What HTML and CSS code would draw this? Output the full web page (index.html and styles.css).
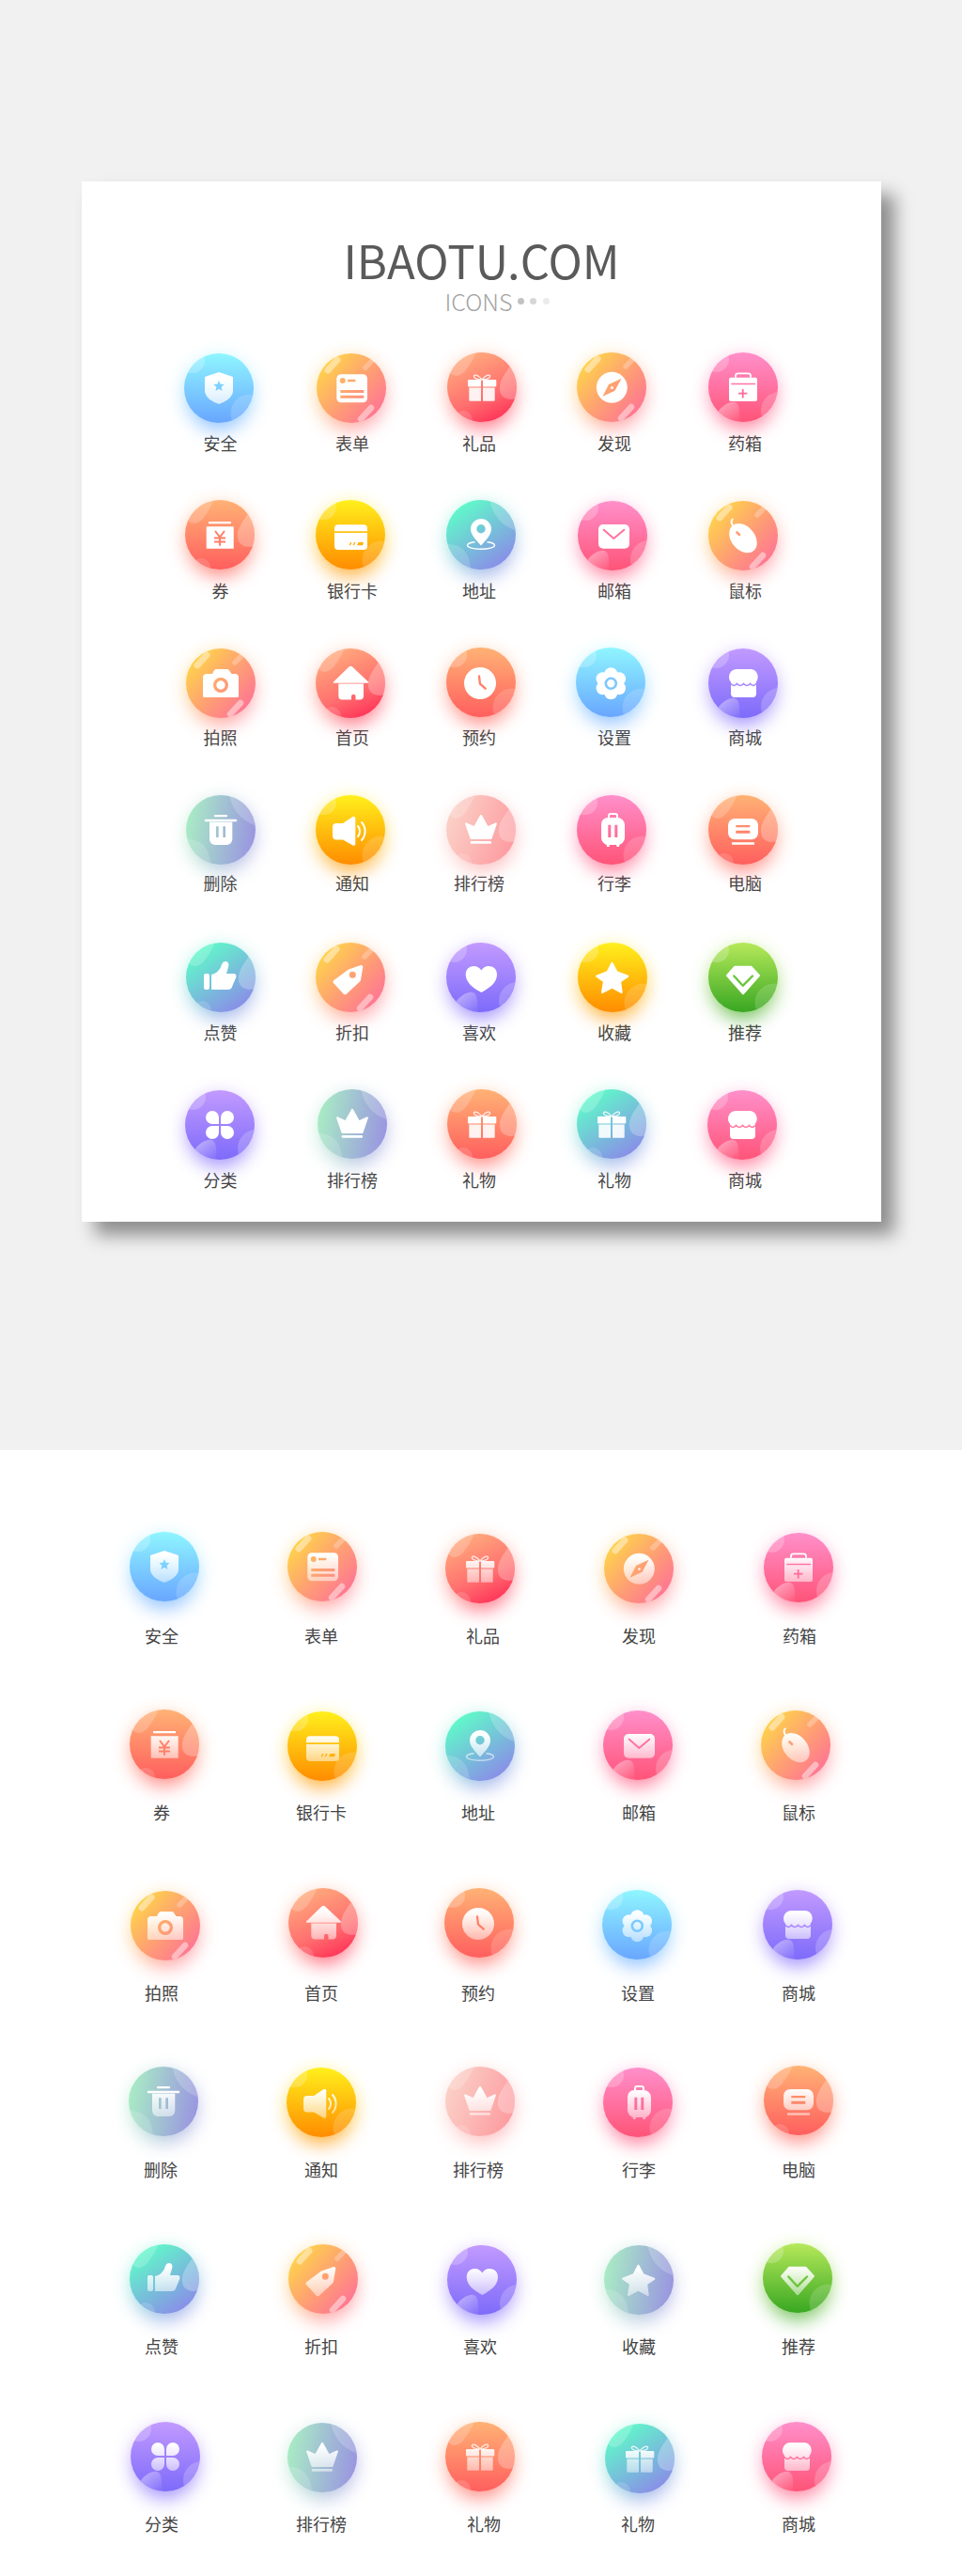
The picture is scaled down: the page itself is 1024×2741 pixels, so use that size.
FILE: index.html
```html
<!DOCTYPE html>
<html lang="zh">
<head>
<meta charset="utf-8">
<title>IBAOTU.COM ICONS</title>
<link rel="stylesheet" href="styles.css">
</head>
<body>
<svg class="sprite" aria-hidden="true">
<defs>
<linearGradient id="leafFade" x1="0" y1="0" x2="1" y2="1"><stop offset="0" stop-color="#fff" stop-opacity=".45"/><stop offset="1" stop-color="#fff" stop-opacity="0"/></linearGradient>
<g id="deco-a" fill="#fff"><circle cx="9" cy="8" r="13" opacity=".22"/><circle cx="70" cy="64" r="20.5" opacity=".16"/></g>
<g id="deco-b" fill="#fff"><path d="M32-2C28 6 24 14 19 20 14 26 6 27 2 20L-2-2Z" opacity=".2"/><path d="M68 13C62 22 55 30 56 40 57 50 68 52 76 48V13Z" opacity=".26"/><circle cx="17" cy="72" r="10" opacity=".15"/></g>
<g id="deco-c" stroke="#fff" stroke-linecap="round" fill="none"><path d="M12 18 22 7" stroke-width="7" opacity=".42"/><path d="M52 15 59 8" stroke-width="5.5" opacity=".25"/><path d="M47 70 58 58" stroke-width="6.5" opacity=".45"/></g>
<g id="deco-d" fill="#fff"><circle cx="8" cy="7" r="14" opacity=".22"/><circle cx="76" cy="62" r="20" opacity=".2"/><path d="M11 62C16 56 23 52 28 53 32 54 34 58 33 76H11Z" fill="url(#leafFade)"/></g>
<g id="deco-e" fill="#fff"><path d="M46-2C48 14 58 28 76 33V-2Z" opacity=".2"/><path d="M-2 47C12 46 26 52 26 76H-2Z" opacity=".16"/></g>

<path id="i-shield" fill="#fff" fill-rule="evenodd" d="M37 20 52 25V40C52 47 43 52 37 54 31 52 22 47 22 40V25ZM37 29 38.6 32.8 42.7 33.1 39.6 35.8 40.5 39.9 37 37.7 33.5 39.9 34.4 35.8 31.3 33.1 35.4 32.8Z"/>
<path id="i-form" fill="#fff" fill-rule="evenodd" d="M26 22.3H49.500A4.500 4.500 0 0 1 54 26.800V47.800A4.500 4.500 0 0 1 49.500 52.300H26A4.500 4.500 0 0 1 21.300 47.800V26.800A4.500 4.500 0 0 1 26 22.300ZM27.700 26A3 3 0 1 0 27.700 32 3 3 0 1 0 27.700 26ZM33 27.800V30.200H41.300V27.800ZM25.300 39V42H50.300V39ZM25.300 44.700V47.700H50.300V44.700Z"/>
<g id="i-gift" fill="#fff"><path d="M23 29H36V36.500H23A1 1 0 0 1 22 35.500V30A1 1 0 0 1 23 29ZM38 29H51.300A1 1 0 0 1 52.300 30V35.500A1 1 0 0 1 51.300 36.500H38Z"/><path opacity=".9" d="M23.300 37.500H36V51.700H24.300A1 1 0 0 1 23.300 50.700ZM38 37.500H50.700V50.700A1 1 0 0 1 49.700 51.700H38Z"/><path fill="none" stroke="#fff" stroke-width="1.300" opacity=".85" d="M37 29C33 24 29 23 28.500 25 28 27.500 32 29 37 29 42 29 46 27.500 45.500 25 45 23 41 24 37 29Z"/></g>
<path id="i-compass" fill="#fff" fill-rule="evenodd" d="M37.300 20.800A16.500 16.500 0 1 0 37.300 53.800 16.500 16.500 0 1 0 37.300 20.800ZM47.500 27.800 40.500 40.800 27.500 46.800 34 34ZM37.500 36A1.500 1.500 0 1 1 37.500 39 1.500 1.500 0 1 1 37.500 36Z"/>
<g id="i-kit"><path fill="#fff" fill-rule="evenodd" d="M24 26.700H50A2 2 0 0 1 52 28.700V50A2 2 0 0 1 50 52H24A2 2 0 0 1 22 50V28.700A2 2 0 0 1 24 26.700ZM24.300 32.700V34.300H50V32.700ZM35.800 39V42.800H32V44.600H35.800V48.400H37.600V44.600H41.400V42.800H37.600V39Z"/><path fill="none" stroke="#fff" stroke-width="1.800" d="M29 26.700V24.800A2.500 2.500 0 0 1 31.500 22.300H42.500A2.500 2.500 0 0 1 45 24.800V26.700"/></g>
<g id="i-coupon"><path fill="#fff" d="M25 23H49V25.300H25ZM22.700 28.300H51.700V51.700H22.700Z"/><path fill="none" stroke="var(--ink)" stroke-width="2" d="M32 33 37 39.500 42 33M37 39.500V48.700M31 40.500H43M31 44.500H43"/></g>
<path id="i-card" fill="#fff" fill-rule="evenodd" d="M24 26.300H51A4 4 0 0 1 55 30.300V49A4 4 0 0 1 51 53H24A4 4 0 0 1 20 49V30.300A4 4 0 0 1 24 26.300ZM20 33.300V35H55V33.300ZM37 45 35.500 48.300H37L38.500 45ZM41 45 39.500 48.300H41L42.500 45ZM45.500 45 44 48.300H50L51 45Z"/>
<g id="i-pin"><path fill="#fff" fill-rule="evenodd" d="M37 48.500C32 43 26 37 26 31A11 11 0 0 1 48 31C48 37 42 43 37 48.500ZM37 26A4.700 4.700 0 1 0 37 35.400 4.700 4.700 0 1 0 37 26Z"/><path fill="none" stroke="#fff" stroke-width="1.400" d="M30.500 44.700C25 45.300 22.500 47 22.500 48.300 22.500 50.500 29 52.300 37 52.300 45 52.300 51.500 50.500 51.500 48.300 51.500 47 49 45.300 43.500 44.700"/></g>
<g id="i-mail"><rect x="22" y="25" width="33" height="25.700" rx="5" fill="#fff"/><path fill="none" stroke="var(--ink)" stroke-width="2" stroke-linecap="round" stroke-linejoin="round" d="M27.700 30.700 38.300 40 49.300 30.700"/></g>
<g id="i-mouse" fill="#fff"><ellipse cx="37" cy="39.700" rx="17.500" ry="12.500" transform="rotate(50 37 39.700)"/><path fill="none" stroke="var(--ink)" stroke-width="2.600" stroke-linecap="round" d="M30.500 33.500 33 36"/><path fill="none" stroke="#fff" stroke-width="2" stroke-linecap="round" d="M27.500 27.500C24 25 24 21 25.700 19.500"/></g>
<path id="i-camera" fill="#fff" fill-rule="evenodd" d="M22 27H28L29.500 24A3.500 3.500 0 0 1 32.500 22H43.500A3.500 3.500 0 0 1 46.500 24L48.500 27H52A4 4 0 0 1 56 31V50.500A1.500 1.500 0 0 1 54.500 52H19.500A1.500 1.500 0 0 1 18 50.500V31A4 4 0 0 1 22 27ZM37 31A8 8 0 1 0 37 47 8 8 0 1 0 37 31ZM37 34.300A4.700 4.700 0 1 1 37 43.700 4.700 4.700 0 1 1 37 34.300Z"/>
<path id="i-home" fill="#fff" fill-rule="evenodd" d="M35.500 19.500A2.500 2.500 0 0 1 39 19.500L56 35.500A.7.7 0 0 1 55.500 36.700H19.500A.7.7 0 0 1 19 35.500ZM24.300 37.500H51V50.500A4 4 0 0 1 47 54.500H42.500V50.500A2.300 2.300 0 0 0 38 50.500V54.500H28.300A4 4 0 0 1 24.300 50.500Z"/>
<g id="i-clock"><circle cx="36" cy="38" r="17" fill="#fff"/><path fill="none" stroke="var(--ink)" stroke-width="2.300" stroke-linecap="round" stroke-linejoin="round" d="M35 30.500 36 38.700 41.700 43.700"/></g>
<g id="i-gear" fill="#fff"><circle cx="37.300" cy="28.300" r="7"/><circle cx="37.300" cy="48.300" r="7"/><circle cx="28.600" cy="33.300" r="7"/><circle cx="46" cy="33.300" r="7"/><circle cx="28.600" cy="43.300" r="7"/><circle cx="46" cy="43.300" r="7"/><circle cx="37.300" cy="38.300" r="10"/><circle cx="37.300" cy="38.300" r="5.500" fill="none" stroke="var(--ink)" stroke-width="2.600"/></g>
<g id="i-store"><path fill="#fff" d="M30 22H45C49.500 22 52.700 26 52.700 30.500 52.700 34 50.500 36.500 48 37.700H26.500C24 36.500 22 34 22 30.500 22 26 25.500 22 30 22Z"/><path fill="#fff" d="M24 36H51V48A4 4 0 0 1 47 52H28A4 4 0 0 1 24 48Z"/><path fill="none" stroke="var(--ink)" stroke-width="1.500" stroke-linecap="round" d="M24 37.500C26 40 28.500 40 30.500 37.500 32.500 40 35.500 40 37.500 37.500 39.500 40 42.500 40 44.500 37.500 46.500 40 49 40 51 37.500"/></g>
<path id="i-trash" fill="#fff" fill-rule="evenodd" d="M31 21H43A1.100 1.100 0 0 1 43 23.300H31A1.100 1.100 0 0 1 31 21ZM21 25.700H53A1.300 1.300 0 0 1 53 28.300H21A1.300 1.300 0 0 1 21 25.700ZM25 28.700H49.300V47A6 6 0 0 1 43.300 53H31A6 6 0 0 1 25 47ZM32 33.300V45H34.700V33.300ZM39.300 33.300V45H42V33.300Z"/>
<g id="i-speaker"><path fill="#fff" d="M22 30H29L39.500 23A1.800 1.800 0 0 1 42.300 24.500V52A1.800 1.800 0 0 1 39.500 53.500L29 47.500H22A4 4 0 0 1 18 43.500V34A4 4 0 0 1 22 30Z"/><path fill="none" stroke="#fff" stroke-width="2" stroke-linecap="round" d="M45 33C47.700 36 47.700 41 45 44M49 29C53.800 34.500 53.800 42.500 49 48"/></g>
<g id="i-crown" fill="#fff"><path stroke="#fff" stroke-width="2.200" stroke-linejoin="round" d="M37 22 44 34.500 52.800 30.500 47.500 46H26.500L21.200 30.500 30 34.500Z"/><rect x="25.700" y="49" width="22.300" height="2.700" rx="1"/></g>
<g id="i-bag"><path fill="#fff" fill-rule="evenodd" d="M33 24H43A8 8 0 0 1 51 32V45.500A7.500 7.500 0 0 1 43.500 53H33.500A7.500 7.500 0 0 1 26 45.500V31A7 7 0 0 1 33 24ZM33.300 31.700V45H36.300V31.700ZM40.300 31.700V45H43.300V31.700Z"/><path fill="none" stroke="#fff" stroke-width="2" d="M34 24V22A2 2 0 0 1 36 20H41A2 2 0 0 1 43 22V24"/><path fill="#fff" d="M31.500 52H35L34.500 55H32ZM42 52H45.500L45 55H42.500Z"/></g>
<path id="i-pc" fill="#fff" fill-rule="evenodd" d="M28 25H46A7 7 0 0 1 53 32V40.300A7 7 0 0 1 46 47.300H28A7 7 0 0 1 21 40.300V32A7 7 0 0 1 28 25ZM29.300 32V34.300H44.300V32ZM29.300 37.700V40.700H44.300V37.700ZM25 50.300H49V52.700H25Z"/>
<path id="i-thumb" fill="#fff" d="M21 33H23A2 2 0 0 1 25 35V48A2 2 0 0 1 23 50H21A2 2 0 0 1 19 48V35A2 2 0 0 1 21 33ZM27 34C32 33 35 30 37 26 38 23 39 20 42 20 45 20 46 23 45 26L43 33H51C53 33 54 35 53.300 37L49 47C48.500 49 47 50 45 50H27Z"/>
<path id="i-tag" fill="#fff" fill-rule="evenodd" d="M48 24A2 2 0 0 1 50.300 26L48 39.500A3 3 0 0 1 47 41.500L33 54.500A2.500 2.500 0 0 1 29.500 54.500L19.500 43.500A2 2 0 0 1 19.500 40L35 28.500A3 3 0 0 1 36.500 28ZM39.300 30.800A3.500 3.500 0 1 0 39.300 37.800 3.500 3.500 0 1 0 39.300 30.800Z"/>
<path id="i-heart" fill="#fff" d="M37.300 53C30 49 20.700 43 20.700 34 20.700 28 25 25 29.500 25 33 25 35.500 27 37.300 29.500 39 27 41.500 25 45 25 50 25 54 28 54 34 54 43 45 49 37.300 53Z"/>
<path id="i-star" fill="#fff" stroke="#fff" stroke-width="2" stroke-linejoin="round" d="M36.500 21.700 41.500 31.200 53.300 35.800 45.100 41.300 46.700 53 36.500 47.500 26 53 27.900 41.300 20 35.800 31.500 31.200Z"/>
<g id="i-gem"><path fill="#fff" stroke="#fff" stroke-width="2" stroke-linejoin="round" d="M28.200 25.700H45.500L54 35 37 54.300 20 35Z"/><path fill="none" stroke="var(--ink)" stroke-width="2.400" stroke-linecap="round" stroke-linejoin="round" d="M27.300 35.500 36.700 45.800 47 35.500"/></g>
<path id="i-clover" fill="#fff" d="M36 36H29A7 7 0 1 1 36 29ZM38 36V29A7 7 0 1 1 45 36ZM36 38V45A7 7 0 1 1 29 38ZM38 38H45A7 7 0 1 1 38 45Z"/>
</defs>
</svg>

<section class="hero">
<div class="card">
<header class="head">
<h1 class="title">IBAOTU.COM</h1>
<div class="sub"><span class="sub-text">ICONS</span><i class="dot dot-a"></i><i class="dot dot-b"></i><i class="dot dot-c"></i></div>
</header>

<div class="row row-a r157 gap10">
<div class="cell"><div class="orb g-blue sx-3 sy1"><div class="face"><svg class="deco" viewBox="0 0 74 74"><use href="#deco-a"/></svg></div><svg class="glyph fade-soft" viewBox="0 0 74 74"><use href="#i-shield"/></svg></div><p class="label">安全</p></div>
<div class="cell"><div class="orb g-sun sx-2 sy1"><div class="face"><svg class="deco" viewBox="0 0 74 74"><use href="#deco-c"/></svg></div><svg class="glyph" viewBox="0 0 74 74"><use href="#i-form"/></svg></div><p class="label">表单</p></div>
<div class="cell"><div class="orb g-red sx6"><div class="face"><svg class="deco" viewBox="0 0 74 74"><use href="#deco-b"/></svg></div><svg class="glyph" viewBox="0 0 74 74"><use href="#i-gift"/></svg></div><p class="label">礼品</p></div>
<div class="cell"><div class="orb g-sun sx-6"><div class="face"><svg class="deco" viewBox="0 0 74 74"><use href="#deco-c"/></svg></div><svg class="glyph" viewBox="0 0 74 74"><use href="#i-compass"/></svg></div><p class="label">发现</p></div>
<div class="cell"><div class="orb g-pink sx-4"><div class="face"><svg class="deco" viewBox="0 0 74 74"><use href="#deco-d"/></svg></div><svg class="glyph" viewBox="0 0 74 74"><use href="#i-kit"/></svg></div><p class="label">药箱</p></div>
</div>

<div class="row row-a r157 gap10">
<div class="cell"><div class="orb g-coral sx-1"><div class="face"><svg class="deco" viewBox="0 0 74 74"><use href="#deco-b"/></svg></div><svg class="glyph" viewBox="0 0 74 74"><use href="#i-coupon"/></svg></div><p class="label">券</p></div>
<div class="cell"><div class="orb g-yellow sx-4"><div class="face"><svg class="deco" viewBox="0 0 74 74"><use href="#deco-a"/></svg></div><svg class="glyph" viewBox="0 0 74 74"><use href="#i-card"/></svg></div><p class="label">银行卡</p></div>
<div class="cell"><div class="orb g-teal sx4"><div class="face"><svg class="deco" viewBox="0 0 74 74"><use href="#deco-e"/></svg></div><svg class="glyph" viewBox="0 0 74 74"><use href="#i-pin"/></svg></div><p class="label">地址</p></div>
<div class="cell"><div class="orb g-pink sx-4 sy1"><div class="face"><svg class="deco" viewBox="0 0 74 74"><use href="#deco-d"/></svg></div><svg class="glyph" viewBox="0 0 74 74"><use href="#i-mail"/></svg></div><p class="label">邮箱</p></div>
<div class="cell"><div class="orb g-sun sx-4 sy1"><div class="face"><svg class="deco" viewBox="0 0 74 74"><use href="#deco-c"/></svg></div><svg class="glyph" viewBox="0 0 74 74"><use href="#i-mouse"/></svg></div><p class="label">鼠标</p></div>
</div>

<div class="row row-a r157 gap9">
<div class="cell"><div class="orb g-sun sx1 sy1"><div class="face"><svg class="deco" viewBox="0 0 74 74"><use href="#deco-c"/></svg></div><svg class="glyph" viewBox="0 0 74 74"><use href="#i-camera"/></svg></div><p class="label">拍照</p></div>
<div class="cell"><div class="orb g-red sx-4 sy1"><div class="face"><svg class="deco" viewBox="0 0 74 74"><use href="#deco-b"/></svg></div><svg class="glyph" viewBox="0 0 74 74"><use href="#i-home"/></svg></div><p class="label">首页</p></div>
<div class="cell"><div class="orb g-coral sx4"><div class="face"><svg class="deco" viewBox="0 0 74 74"><use href="#deco-a"/></svg></div><svg class="glyph" viewBox="0 0 74 74"><use href="#i-clock"/></svg></div><p class="label">预约</p></div>
<div class="cell"><div class="orb g-blue sx-8"><div class="face"><svg class="deco" viewBox="0 0 74 74"><use href="#deco-a"/></svg></div><svg class="glyph" viewBox="0 0 74 74"><use href="#i-gear"/></svg></div><p class="label">设置</p></div>
<div class="cell"><div class="orb g-purple sx-4 sy1"><div class="face"><svg class="deco" viewBox="0 0 74 74"><use href="#deco-d"/></svg></div><svg class="glyph" viewBox="0 0 74 74"><use href="#i-store"/></svg></div><p class="label">商城</p></div>
</div>

<div class="row row-a r157 gap7">
<div class="cell"><div class="orb g-mint sx1"><div class="face"><svg class="deco" viewBox="0 0 74 74"><use href="#deco-e"/></svg></div><svg class="glyph" viewBox="0 0 74 74"><use href="#i-trash"/></svg></div><p class="label">删除</p></div>
<div class="cell"><div class="orb g-yellow sx-4"><div class="face"><svg class="deco" viewBox="0 0 74 74"><use href="#deco-a"/></svg></div><svg class="glyph" viewBox="0 0 74 74"><use href="#i-speaker"/></svg></div><p class="label">通知</p></div>
<div class="cell"><div class="orb g-blush sx4"><div class="face"><svg class="deco" viewBox="0 0 74 74"><use href="#deco-b"/></svg></div><svg class="glyph" viewBox="0 0 74 74"><use href="#i-crown"/></svg></div><p class="label">排行榜</p></div>
<div class="cell"><div class="orb g-pink sx-6"><div class="face"><svg class="deco" viewBox="0 0 74 74"><use href="#deco-a"/></svg></div><svg class="glyph" viewBox="0 0 74 74"><use href="#i-bag"/></svg></div><p class="label">行李</p></div>
<div class="cell"><div class="orb g-coral sx-4"><div class="face"><svg class="deco" viewBox="0 0 74 74"><use href="#deco-b"/></svg></div><svg class="glyph" viewBox="0 0 74 74"><use href="#i-pc"/></svg></div><p class="label">电脑</p></div>
</div>

<div class="row row-a r156 gap9">
<div class="cell"><div class="orb g-teal sx1"><div class="face"><svg class="deco" viewBox="0 0 74 74"><use href="#deco-b"/></svg></div><svg class="glyph" viewBox="0 0 74 74"><use href="#i-thumb"/></svg></div><p class="label">点赞</p></div>
<div class="cell"><div class="orb g-sun sx-4"><div class="face"><svg class="deco" viewBox="0 0 74 74"><use href="#deco-c"/></svg></div><svg class="glyph" viewBox="0 0 74 74"><use href="#i-tag"/></svg></div><p class="label">折扣</p></div>
<div class="cell"><div class="orb g-purple sx4"><div class="face"><svg class="deco" viewBox="0 0 74 74"><use href="#deco-d"/></svg></div><svg class="glyph" viewBox="0 0 74 74"><use href="#i-heart"/></svg></div><p class="label">喜欢</p></div>
<div class="cell"><div class="orb g-yellow sx-4"><div class="face"><svg class="deco" viewBox="0 0 74 74"><use href="#deco-a"/></svg></div><svg class="glyph" viewBox="0 0 74 74"><use href="#i-star"/></svg></div><p class="label">收藏</p></div>
<div class="cell"><div class="orb g-green sx-4"><div class="face"><svg class="deco" viewBox="0 0 74 74"><use href="#deco-a"/></svg></div><svg class="glyph" viewBox="0 0 74 74"><use href="#i-gem"/></svg></div><p class="label">推荐</p></div>
</div>

<div class="row row-a r142 gap10">
<div class="cell"><div class="orb g-purple sx-1 sy1"><div class="face"><svg class="deco" viewBox="0 0 74 74"><use href="#deco-d"/></svg></div><svg class="glyph" viewBox="0 0 74 74"><use href="#i-clover"/></svg></div><p class="label">分类</p></div>
<div class="cell"><div class="orb g-mint"><div class="face"><svg class="deco" viewBox="0 0 74 74"><use href="#deco-e"/></svg></div><svg class="glyph" viewBox="0 0 74 74"><use href="#i-crown"/></svg></div><p class="label">排行榜</p></div>
<div class="cell"><div class="orb g-coral sx6"><div class="face"><svg class="deco" viewBox="0 0 74 74"><use href="#deco-b"/></svg></div><svg class="glyph" viewBox="0 0 74 74"><use href="#i-gift"/></svg></div><p class="label">礼物</p></div>
<div class="cell"><div class="orb g-teal sx-6"><div class="face"><svg class="deco" viewBox="0 0 74 74"><use href="#deco-b"/></svg></div><svg class="glyph" viewBox="0 0 74 74"><use href="#i-gift"/></svg></div><p class="label">礼物</p></div>
<div class="cell"><div class="orb g-pink sx-6 sy1"><div class="face"><svg class="deco" viewBox="0 0 74 74"><use href="#deco-d"/></svg></div><svg class="glyph" viewBox="0 0 74 74"><use href="#i-store"/></svg></div><p class="label">商城</p></div>
</div>
</div>
</section>

<section class="sheet">
<div class="row row-b r189 gap24">
<div class="cell"><div class="orb g-blue sx6"><div class="face"><svg class="deco" viewBox="0 0 74 74"><use href="#deco-a"/></svg></div><svg class="glyph fade" viewBox="0 0 74 74"><use href="#i-shield"/></svg></div><p class="label">安全</p></div>
<div class="cell"><div class="orb g-sun sx2"><div class="face"><svg class="deco" viewBox="0 0 74 74"><use href="#deco-c"/></svg></div><svg class="glyph fade" viewBox="0 0 74 74"><use href="#i-form"/></svg></div><p class="label">表单</p></div>
<div class="cell"><div class="orb g-red sy2"><div class="face"><svg class="deco" viewBox="0 0 74 74"><use href="#deco-b"/></svg></div><svg class="glyph fade" viewBox="0 0 74 74"><use href="#i-gift"/></svg></div><p class="label lx6">礼品</p></div>
<div class="cell"><div class="orb g-sun sy2"><div class="face"><svg class="deco" viewBox="0 0 74 74"><use href="#deco-c"/></svg></div><svg class="glyph fade" viewBox="0 0 74 74"><use href="#i-compass"/></svg></div><p class="label">发现</p></div>
<div class="cell"><div class="orb g-pink sy1"><div class="face"><svg class="deco" viewBox="0 0 74 74"><use href="#deco-d"/></svg></div><svg class="glyph fade" viewBox="0 0 74 74"><use href="#i-kit"/></svg></div><p class="label lx2">药箱</p></div>
</div>

<div class="row row-b r190 gap23">
<div class="cell"><div class="orb g-coral sx6"><div class="face"><svg class="deco" viewBox="0 0 74 74"><use href="#deco-b"/></svg></div><svg class="glyph fade" viewBox="0 0 74 74"><use href="#i-coupon"/></svg></div><p class="label">券</p></div>
<div class="cell"><div class="orb g-yellow sx2 sy2"><div class="face"><svg class="deco" viewBox="0 0 74 74"><use href="#deco-a"/></svg></div><svg class="glyph fade" viewBox="0 0 74 74"><use href="#i-card"/></svg></div><p class="label">银行卡</p></div>
<div class="cell"><div class="orb g-teal sy2"><div class="face"><svg class="deco" viewBox="0 0 74 74"><use href="#deco-e"/></svg></div><svg class="glyph fade" viewBox="0 0 74 74"><use href="#i-pin"/></svg></div><p class="label lx-4">地址</p></div>
<div class="cell"><div class="orb g-pink sx-2 sy1"><div class="face"><svg class="deco" viewBox="0 0 74 74"><use href="#deco-d"/></svg></div><svg class="glyph fade" viewBox="0 0 74 74"><use href="#i-mail"/></svg></div><p class="label">邮箱</p></div>
<div class="cell"><div class="orb g-sun sx-6 sy1"><div class="face"><svg class="deco" viewBox="0 0 74 74"><use href="#deco-c"/></svg></div><svg class="glyph fade" viewBox="0 0 74 74"><use href="#i-mouse"/></svg></div><p class="label">鼠标</p></div>
</div>

<div class="row row-b r189 gap25">
<div class="cell"><div class="orb g-sun sx8 sy3"><div class="face"><svg class="deco" viewBox="0 0 74 74"><use href="#deco-c"/></svg></div><svg class="glyph fade" viewBox="0 0 74 74"><use href="#i-camera"/></svg></div><p class="label">拍照</p></div>
<div class="cell"><div class="orb g-red sx4"><div class="face"><svg class="deco" viewBox="0 0 74 74"><use href="#deco-b"/></svg></div><svg class="glyph fade" viewBox="0 0 74 74"><use href="#i-home"/></svg></div><p class="label">首页</p></div>
<div class="cell"><div class="orb g-coral sx-2"><div class="face"><svg class="deco" viewBox="0 0 74 74"><use href="#deco-a"/></svg></div><svg class="glyph fade" viewBox="0 0 74 74"><use href="#i-clock"/></svg></div><p class="label lx-4">预约</p></div>
<div class="cell"><div class="orb g-blue sx-4 sy2"><div class="face"><svg class="deco" viewBox="0 0 74 74"><use href="#deco-a"/></svg></div><svg class="glyph fade" viewBox="0 0 74 74"><use href="#i-gear"/></svg></div><p class="label lx-2">设置</p></div>
<div class="cell"><div class="orb g-purple sx-2 sy2"><div class="face"><svg class="deco" viewBox="0 0 74 74"><use href="#deco-d"/></svg></div><svg class="glyph fade" viewBox="0 0 74 74"><use href="#i-store"/></svg></div><p class="label">商城</p></div>
</div>

<div class="row row-b r189 gap24">
<div class="cell"><div class="orb g-mint sx4 sy1"><div class="face"><svg class="deco" viewBox="0 0 74 74"><use href="#deco-e"/></svg></div><svg class="glyph fade" viewBox="0 0 74 74"><use href="#i-trash"/></svg></div><p class="label lx-2">删除</p></div>
<div class="cell"><div class="orb g-yellow sy2"><div class="face"><svg class="deco" viewBox="0 0 74 74"><use href="#deco-a"/></svg></div><svg class="glyph fade" viewBox="0 0 74 74"><use href="#i-speaker"/></svg></div><p class="label">通知</p></div>
<div class="cell"><div class="orb g-blush sy1"><div class="face"><svg class="deco" viewBox="0 0 74 74"><use href="#deco-b"/></svg></div><svg class="glyph fade" viewBox="0 0 74 74"><use href="#i-crown"/></svg></div><p class="label lx-4">排行榜</p></div>
<div class="cell"><div class="orb g-pink sx-2 sy2"><div class="face"><svg class="deco" viewBox="0 0 74 74"><use href="#deco-a"/></svg></div><svg class="glyph fade" viewBox="0 0 74 74"><use href="#i-bag"/></svg></div><p class="label">行李</p></div>
<div class="cell"><div class="orb g-coral"><div class="face"><svg class="deco" viewBox="0 0 74 74"><use href="#deco-b"/></svg></div><svg class="glyph fade" viewBox="0 0 74 74"><use href="#i-pc"/></svg></div><p class="label">电脑</p></div>
</div>

<div class="row row-b r190 gap23">
<div class="cell"><div class="orb g-teal sx6 sy1"><div class="face"><svg class="deco" viewBox="0 0 74 74"><use href="#deco-b"/></svg></div><svg class="glyph fade" viewBox="0 0 74 74"><use href="#i-thumb"/></svg></div><p class="label">点赞</p></div>
<div class="cell"><div class="orb g-sun sx4 sy1"><div class="face"><svg class="deco" viewBox="0 0 74 74"><use href="#deco-c"/></svg></div><svg class="glyph fade" viewBox="0 0 74 74"><use href="#i-tag"/></svg></div><p class="label">折扣</p></div>
<div class="cell"><div class="orb g-purple sx4 sy2"><div class="face"><svg class="deco" viewBox="0 0 74 74"><use href="#deco-d"/></svg></div><svg class="glyph fade" viewBox="0 0 74 74"><use href="#i-heart"/></svg></div><p class="label">喜欢</p></div>
<div class="cell"><div class="orb g-mint sy2"><div class="face"><svg class="deco" viewBox="0 0 74 74"><use href="#deco-e"/></svg></div><svg class="glyph fade" viewBox="0 0 74 74"><use href="#i-star"/></svg></div><p class="label">收藏</p></div>
<div class="cell"><div class="orb g-green sx-2"><div class="face"><svg class="deco" viewBox="0 0 74 74"><use href="#deco-a"/></svg></div><svg class="glyph fade" viewBox="0 0 74 74"><use href="#i-gem"/></svg></div><p class="label">推荐</p></div>
</div>

<div class="row row-b r130 gap22">
<div class="cell"><div class="orb g-purple sx8"><div class="face"><svg class="deco" viewBox="0 0 74 74"><use href="#deco-d"/></svg></div><svg class="glyph fade" viewBox="0 0 74 74"><use href="#i-clover"/></svg></div><p class="label">分类</p></div>
<div class="cell"><div class="orb g-mint sx2 sy1"><div class="face"><svg class="deco" viewBox="0 0 74 74"><use href="#deco-e"/></svg></div><svg class="glyph fade" viewBox="0 0 74 74"><use href="#i-crown"/></svg></div><p class="label">排行榜</p></div>
<div class="cell"><div class="orb g-coral"><div class="face"><svg class="deco" viewBox="0 0 74 74"><use href="#deco-b"/></svg></div><svg class="glyph fade" viewBox="0 0 74 74"><use href="#i-gift"/></svg></div><p class="label lx8">礼物</p></div>
<div class="cell"><div class="orb g-teal sx2 sy2"><div class="face"><svg class="deco" viewBox="0 0 74 74"><use href="#deco-b"/></svg></div><svg class="glyph fade" viewBox="0 0 74 74"><use href="#i-gift"/></svg></div><p class="label lx-2">礼物</p></div>
<div class="cell"><div class="orb g-pink sx-4"><div class="face"><svg class="deco" viewBox="0 0 74 74"><use href="#deco-d"/></svg></div><svg class="glyph fade" viewBox="0 0 74 74"><use href="#i-store"/></svg></div><p class="label">商城</p></div>
</div>
</section>
</body>
</html>
```
FILE: styles.css
```css
* { box-sizing: border-box; }
html, body { margin: 0; padding: 0; }
body {
  width: 1024px;
  height: 2741px;
  overflow: hidden;
  background: #fff;
  font-family: "Noto Sans CJK SC", "Noto Sans", sans-serif;
  color: #444;
}
.sprite { display: block; width: 0; height: 0; }

.hero {
  height: 1543px;
  padding: 193px 0 0 87px;
  background: #f1f1f1;
}
.card {
  width: 851px;
  height: 1107px;
  background: #fff;
  box-shadow: 14px 14px 18px rgba(0, 0, 0, .42);
}
.head {
  height: 182px;
  padding-top: 55px;
  display: flex;
  flex-direction: column;
  align-items: center;
}
.title {
  margin: 0;
  font-size: 49px;
  line-height: 56px;
  font-weight: 400;
  color: #5a5a5a;
  white-space: nowrap;
}
.sub {
  display: flex;
  align-items: center;
  margin-left: 39px;
  height: 32px;
}
.sub-text {
  font-size: 25px;
  line-height: 32px;
  font-weight: 300;
  color: #a3a3a3;
  margin-right: 5px;
}
.dot { display: block; width: 7px; height: 7px; border-radius: 50%; margin-right: 6px; }
.dot-a { background: #c2c2c2; }
.dot-b { background: #d6d6d6; }
.dot-c { background: #ebebeb; margin-left: 1px; }

.sheet { padding: 87px 0 0 87px; background: #fff; }

.row { display: grid; }
.row-a { grid-template-columns: 140px 141px 129px 159px 119px; margin-left: -9.5px; padding-left: 87px; }
.row-b { grid-template-columns: 170px 170px 168px 170px 170px; }
.r156 { height: 156px; }
.r157 { height: 157px; }
.r142 { height: 142px; }
.r189 { height: 189px; }
.r190 { height: 190px; }
.r130 { height: 130px; }
.gap7 { --gap: 7; }
.gap9 { --gap: 9; }
.gap10 { --gap: 10; }
.gap22 { --gap: 22; }
.gap23 { --gap: 23; }
.gap24 { --gap: 24; }
.gap25 { --gap: 25; }

.cell { display: flex; flex-direction: column; align-items: center; }

.orb {
  display: grid;
  width: 74px;
  height: 74px;
  flex: none;
  margin-left: calc(var(--sx, 0) * 1px);
  margin-top: calc(var(--sy, 0) * 1px);
  margin-bottom: calc((var(--gap) - var(--sy, 0)) * 1px);
}
.orb::before {
  content: "";
  grid-area: 1 / 1;
  margin: 6px 2px -7px;
  border-radius: 50%;
  background: var(--g);
  filter: blur(10px);
  opacity: .78;
}
.face {
  grid-area: 1 / 1;
  isolation: isolate;
  border-radius: 50%;
  overflow: hidden;
  background: var(--g);
}
.deco { display: block; width: 74px; height: 74px; }
.glyph { grid-area: 1 / 1; isolation: isolate; display: block; width: 74px; height: 74px; }
.fade {
  -webkit-mask-image: linear-gradient(#fff 32%, rgba(255, 255, 255, .5) 72%);
  mask-image: linear-gradient(#fff 32%, rgba(255, 255, 255, .5) 72%);
}
.fade-soft {
  -webkit-mask-image: linear-gradient(#fff 35%, rgba(255, 255, 255, .72) 72%);
  mask-image: linear-gradient(#fff 35%, rgba(255, 255, 255, .72) 72%);
}

.label {
  margin: 0 0 0 calc(var(--lx, 0) * 1px);
  font-size: 18px;
  line-height: 24px;
  font-weight: 400;
  color: #444;
  white-space: nowrap;
}

.sx-8 { --sx: -8; } .sx-6 { --sx: -6; } .sx-4 { --sx: -4; } .sx-3 { --sx: -3; } .sx-2 { --sx: -2; } .sx-1 { --sx: -1; }
.sx1 { --sx: 1; } .sx2 { --sx: 2; } .sx4 { --sx: 4; } .sx6 { --sx: 6; } .sx8 { --sx: 8; }
.sy1 { --sy: 1; } .sy2 { --sy: 2; } .sy3 { --sy: 3; }
.lx-4 { --lx: -4; } .lx-2 { --lx: -2; } .lx2 { --lx: 2; } .lx6 { --lx: 6; } .lx8 { --lx: 8; }

.g-blue { --g: linear-gradient(180deg, #8ff6ff, #69a6ff); --ink: #7bc8ff; }
.g-sun { --g: linear-gradient(132deg, #ffd748 10%, #fe9c76 55%, #ff7097 92%); --ink: #ff9d78; }
.g-red { --g: linear-gradient(155deg, #ffb27e 5%, #ff6f6f 60%, #ff2a55 95%); --ink: #ff7f6f; }
.g-coral { --g: linear-gradient(180deg, #ffb275, #ff5f5e); --ink: #ff7f68; }
.g-yellow { --g: linear-gradient(180deg, #fff01c, #ff8c00); --ink: #ffc40a; }
.g-pink { --g: linear-gradient(180deg, #ff8fca, #ff5478); --ink: #ff749f; }
.g-purple { --g: linear-gradient(180deg, #c29aff, #7d6bfa); --ink: #a685ff; }
.g-teal { --g: linear-gradient(145deg, #5ffbc9 12%, #8a8de8 88%); --ink: #74cfd8; }
.g-mint { --g: linear-gradient(100deg, #a9edc4 5%, #9a97e0 92%); --ink: #a3c4d8; }
.g-blush { --g: linear-gradient(110deg, #fbd2c8 8%, #fd9a9f 92%); --ink: #fdb6b2; }
.g-green { --g: linear-gradient(180deg, #b6e95a, #39a722); --ink: #6cc63e; }
```
